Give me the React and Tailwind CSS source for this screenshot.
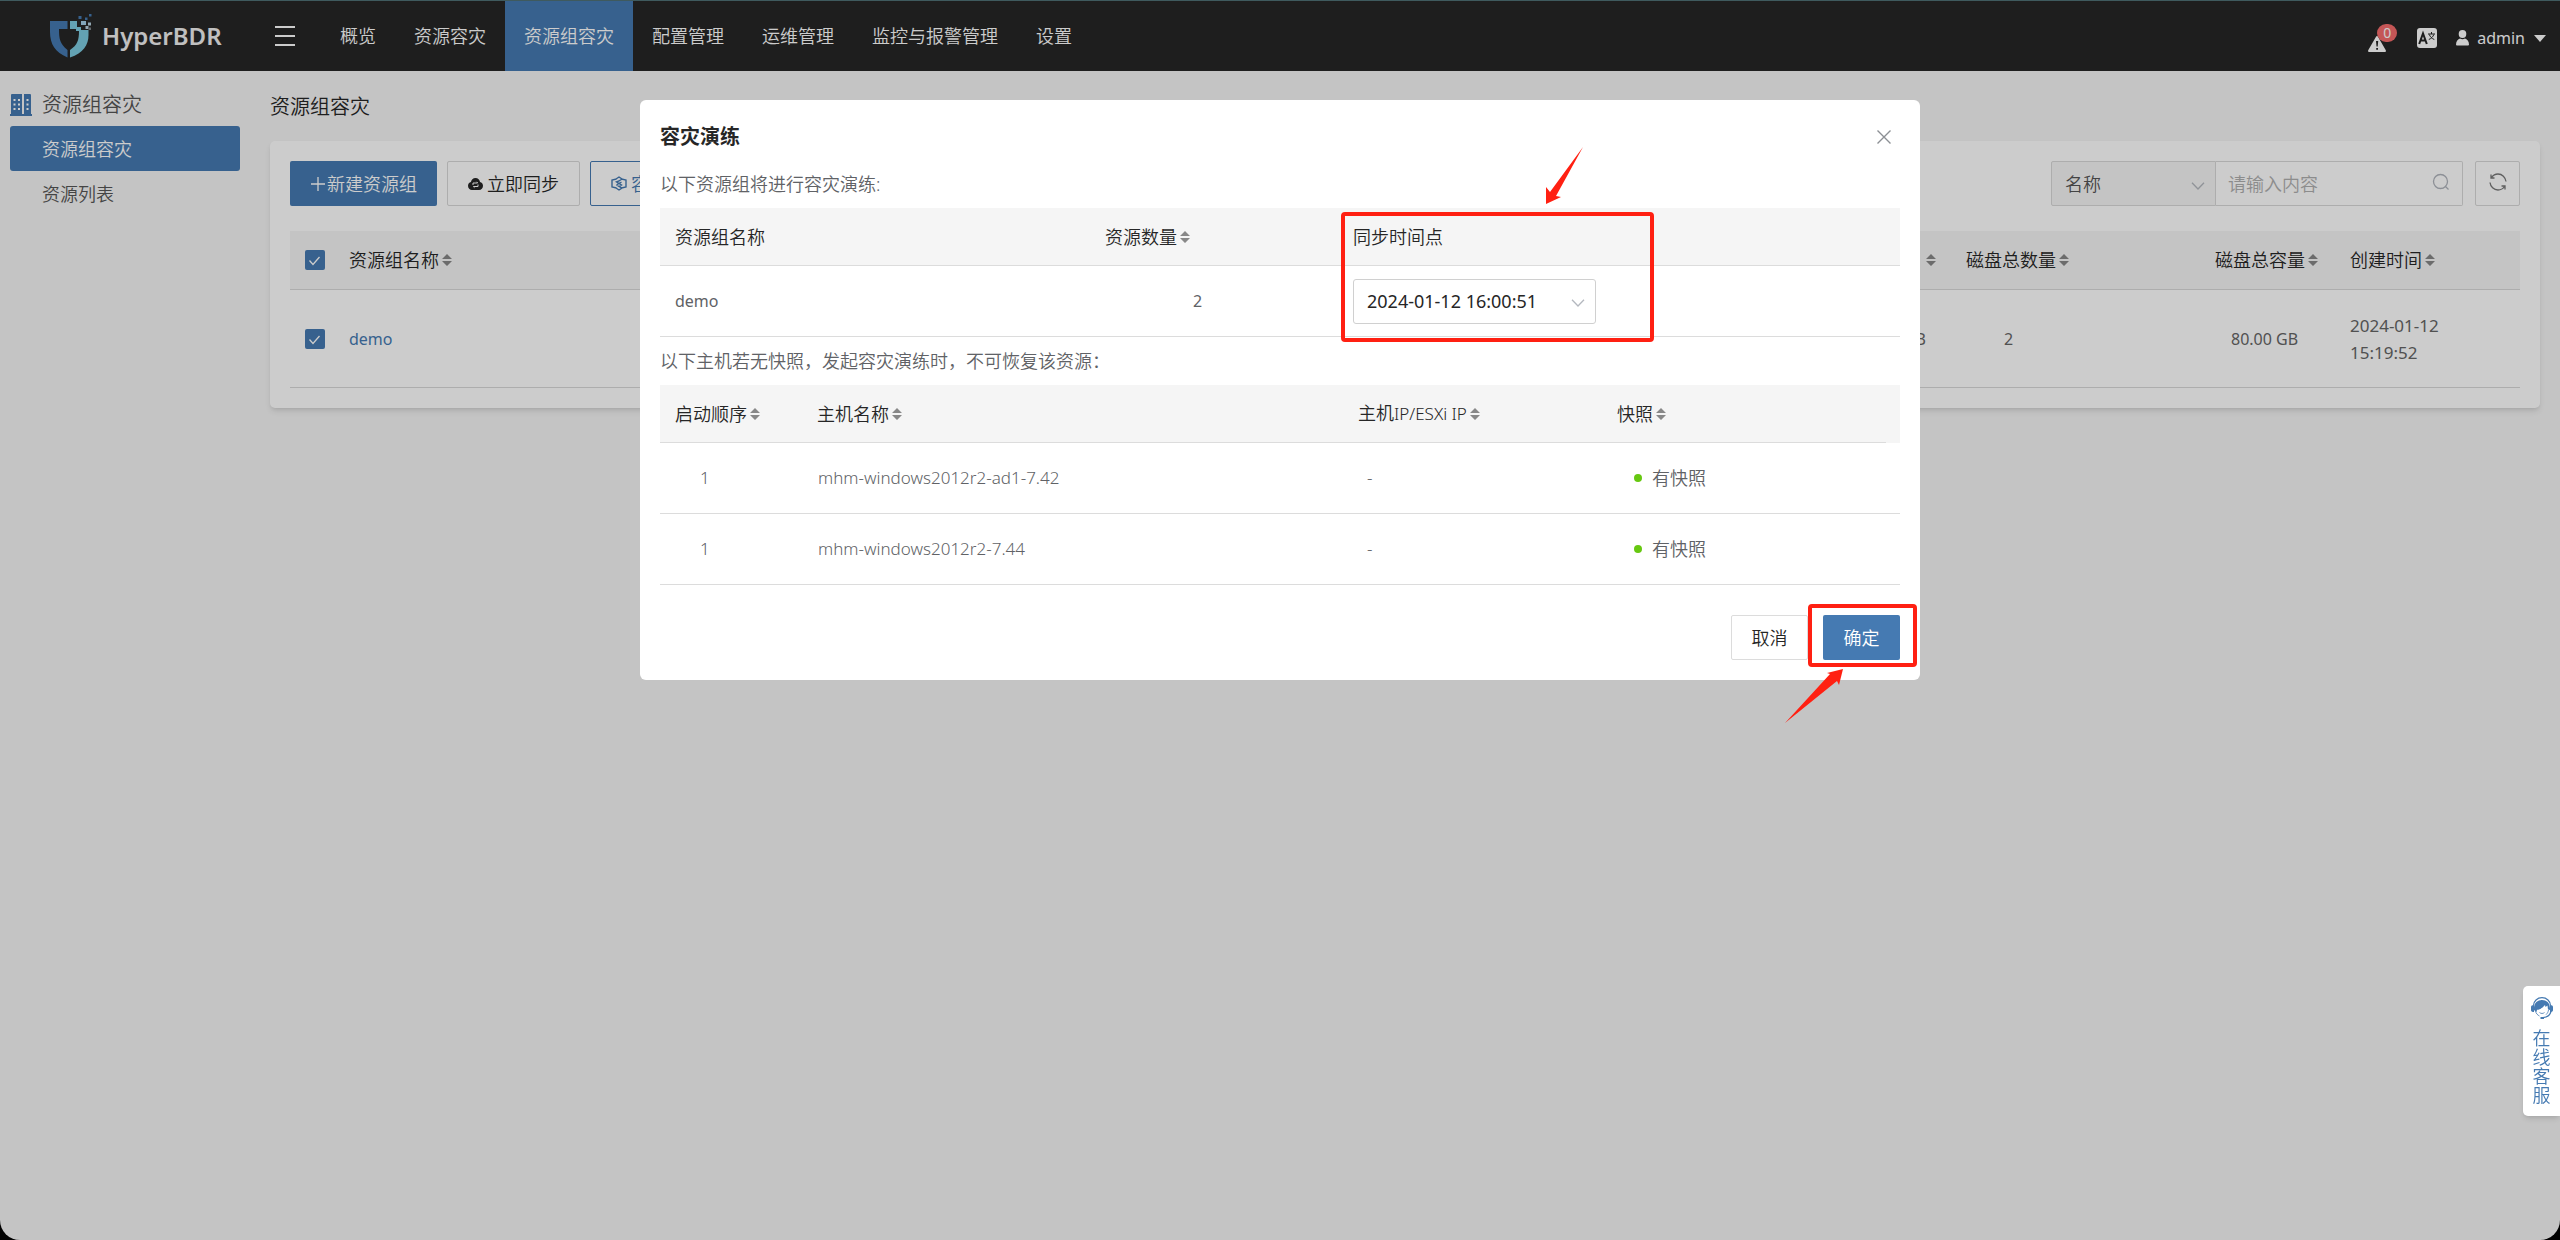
import React, { useState } from "react";

const NAV = ["概览", "资源容灾", "资源组容灾", "配置管理", "运维管理", "监控与报警管理", "设置"];

const HOSTS = [
  { order: 1, name: "mhm-windows2012r2-ad1-7.42", ip: "-", snapshot: "有快照" },
  { order: 1, name: "mhm-windows2012r2-7.44", ip: "-", snapshot: "有快照" },
];

function SortIcon() {
  return (
    <svg className="h-3 w-[10px] shrink-0 fill-[#888]" viewBox="0 0 10 12" aria-hidden="true">
      <path d="M5 0 10 5H0ZM5 12 0 7h10Z" />
    </svg>
  );
}

function Sortable({ children }) {
  return (
    <span className="flex items-center gap-[3px]">
      {children}
      <SortIcon />
    </span>
  );
}

function Chevron({ className }) {
  return (
    <svg className={className} viewBox="0 0 14 8" fill="none" stroke="#b4b8bf" strokeWidth="1.3" aria-hidden="true">
      <path d="m1 .8 6 6.2 6-6.2" />
    </svg>
  );
}

function Checkbox({ label }) {
  return (
    <label className="grid w-5">
      <input
        type="checkbox"
        defaultChecked
        aria-label={label}
        className="col-start-1 row-start-1 size-5 appearance-none rounded-[2px] bg-[#457ab2]"
      />
      <svg className="pointer-events-none col-start-1 row-start-1 size-5" viewBox="0 0 20 20" fill="none" stroke="#fff" strokeWidth="1.3">
        <path d="m4.500 10.500 3.500 4L14.500 7" />
      </svg>
    </label>
  );
}

function Logo() {
  return (
    <a href="#" className="flex items-center gap-[10px] text-2xl font-semibold text-[#f0f0f0]">
      <svg className="h-11 w-[42px]" viewBox="0 0 42 44">
        <path fill="#457ab2" d="M0 7h17.500v8H9c0 10 1 15 8.500 21v7.500C5 38 0 30 0 18Z" />
        <path fill="#7ccbe0" d="M20 7h7v6h4v3h7.500v5c0 10-5 18-18.500 22.500V36c7.500-5 9-10 9-19h-3v-2h-6Z" />
        <path fill="#a4cfe8" d="M31 7h5v4h-5z" />
        <path fill="#457ab2" d="M28.500 2h3v3h-3zM35 3.500h2.500V6H35zM39 0h2.500v2.500H39z" />
        <path fill="#b8d2e2" d="M38 8.500h3v3h-3zM35.500 12h3v3h-3z" />
        <path fill="#7c8288" d="M38.500 13.500h2.500V16h-2.500z" />
      </svg>
      HyperBDR
    </a>
  );
}

function Header() {
  return (
    <header className="flex h-[71px] items-stretch border-t border-[#4f7176] bg-[#262626] text-white">
      <div className="flex w-[225px] items-center pl-[50px]">
        <Logo />
      </div>
      <button type="button" aria-label="菜单" className="ml-[50px] flex w-5 flex-col justify-center gap-[7px]">
        <span className="h-[2px] bg-white" />
        <span className="h-[2px] bg-white" />
        <span className="h-[2px] bg-white" />
      </button>
      <nav className="ml-[26px] flex">
        {NAV.map((item) => (
          <a
            key={item}
            href="#"
            className={`flex items-center whitespace-nowrap px-[19px] ${item === "资源组容灾" ? "bg-[#457ab2]" : ""}`}
          >
            {item}
          </a>
        ))}
      </nav>
      <div className="ml-auto flex items-center pt-1 pr-[14px] font-normal">
        <button type="button" aria-label="报警" className="relative mt-3">
          <svg className="block h-4 w-[18px]" viewBox="0 0 18 16">
            <path fill="#fff" d="M9 0q.6 0 1 .8l7.800 13.400q.5 1.500-.8 1.800H1Q-.3 15.700.2 14.200L8 .8Q8.400 0 9 0Z" />
            <path fill="#262626" d="M8 5h2.200l-.5 5.500H8.500ZM8.200 12h1.800v1.800H8.200z" />
          </svg>
          <span className="absolute -top-3 left-[9px] flex h-[18px] w-5 items-center justify-center rounded-full bg-[#f56c6c] text-sm">
            0
          </span>
        </button>
        <button type="button" aria-label="语言" className="ml-[31px]">
          <svg className="block size-5" viewBox="0 0 20 20">
            <rect width="20" height="20" rx="3" fill="#fff" />
            <path fill="none" stroke="#262626" strokeWidth="2" d="M2.200 16 6 5.500 9.800 16M3.500 12.500h5" />
            <path fill="none" stroke="#262626" strokeWidth="1" d="M11 6h7M14.500 4v2M12.300 6.500c.8 2.300 2.500 4 5 5M16.800 6.500c-.8 2.300-2.500 4-5 5" />
          </svg>
        </button>
        <button type="button" className="ml-[19px] flex items-center text-base">
          <svg className="mr-2 h-4 w-[13px] fill-white" viewBox="0 0 13 16">
            <ellipse cx="6.500" cy="4" rx="3.800" ry="4" />
            <path d="M0 14.500C0 11 2 9 4 8.500c1.500 1 3.500 1 5 0 2 .5 4 2.500 4 6q0 1-1 1H1q-1 0-1-1Z" />
          </svg>
          admin
          <svg className="ml-[9px] h-[7px] w-3 fill-white" viewBox="0 0 12 7">
            <path d="M0 0h12L6 7Z" />
          </svg>
        </button>
      </div>
    </header>
  );
}

function Sidebar() {
  return (
    <aside className="w-[250px] shrink-0 px-[10px] pt-[13px] text-[#555]">
      <div className="flex h-[42px] items-center gap-[10px] text-xl">
        <svg className="size-[22px]" viewBox="0 0 22 22">
          <path fill="#457ab2" d="M2 0h10v20H1V1Q1 0 2 0ZM14 0h6q1 0 1 1v19h-7ZM0 20h22v2H0Z" />
          <path fill="#fff" d="M3.500 5h2v2h-2zM8 5h2v2H8zM3.500 9.500h2v2h-2zM8 9.500h2v2H8zM3.500 14h2v2h-2zM8 14h2v2H8zM16.500 5h2v2h-2zM16.500 9.500h2v2h-2zM16.500 14h2v2h-2z" />
        </svg>
        资源组容灾
      </div>
      <a href="#" className="flex h-[45px] items-center rounded-[3px] bg-[#457ab2] pl-8 text-white">
        资源组容灾
      </a>
      <a href="#" className="flex h-[45px] items-center pl-8">
        资源列表
      </a>
    </aside>
  );
}

function Toolbar() {
  return (
    <div className="flex h-[45px] text-[#262626]">
      <button type="button" className="flex items-center rounded-[2px] bg-[#457ab2] px-5 text-white">
        <svg className="mr-px h-4 w-4" viewBox="0 0 16 16" fill="none" stroke="currentColor" strokeWidth="1.3">
          <path d="M8 1v14M1 8h14" />
        </svg>
        新建资源组
      </button>
      <button type="button" className="ml-[10px] flex items-center gap-1 rounded-[2px] border border-[#d9d9d9] px-5">
        <svg className="h-3 w-[15px]" viewBox="0 0 15 12">
          <path fill="#262626" d="M7.500 0c2.500 0 4.300 1.700 4.500 4 1.800.5 3 1.900 3 3.800 0 2.400-1.700 4.200-4 4.200H4C1.700 12 0 10.200 0 7.800 0 5.900 1.200 4.500 3 4 3.200 1.700 5 0 7.500 0Z" />
          <path fill="none" stroke="#fff" d="M5 7V5h4.500M8.500 3.800 9.700 5M10 6.500v2H5.500M6.500 9.700 5.300 8.500" />
        </svg>
        立即同步
      </button>
      <button type="button" className="ml-[10px] flex items-center gap-1 rounded-[2px] border border-[#457ab2] px-5 text-[#457ab2]">
        <svg className="h-[15px] w-4" viewBox="0 0 16 15" fill="none" stroke="currentColor" strokeWidth="1.4">
          <path d="M5.500 3 1 4v7l4.500 1M10.500 3 15 4v7l-4.500 1M5 3l3-2 3 2-3 2-2.500 1L8 7.500 10.500 6M5.500 9 8 7.500 10.500 9 8 10.500M5 12l3 2 3-2-3-1.500L5.500 9" />
        </svg>
        容灾演练
      </button>

      <div className="ml-auto flex">
        <div className="grid w-[165px] items-center">
          <select
            aria-label="搜索字段"
            className="col-start-1 row-start-1 h-[45px] appearance-none rounded-l-[2px] border border-[#d9d9d9] bg-[#f5f5f5] pl-[13px] text-[#555]"
          >
            <option>名称</option>
          </select>
          <Chevron className="pointer-events-none col-start-1 row-start-1 mr-[11px] mt-1 h-2 w-[14px] justify-self-end" />
        </div>
        <div className="flex w-[247px] items-center rounded-r-[2px] border border-l-0 border-[#d9d9d9] px-3">
          <input
            type="text"
            aria-label="搜索内容"
            placeholder="请输入内容"
            className="min-w-0 flex-1 bg-transparent outline-none placeholder:text-[#b0b0b0]"
          />
          <svg className="mb-1 size-[18px]" viewBox="0 0 18 18" fill="none" stroke="#b0b4bc" strokeWidth="1.3">
            <circle cx="8.500" cy="8.500" r="7" />
            <path d="m13.500 13.500 3 3" />
          </svg>
        </div>
        <button
          type="button"
          aria-label="刷新"
          className="ml-3 flex w-[45px] items-center justify-center rounded-[2px] border border-[#d9d9d9]"
        >
          <svg className="mb-1 size-[18px]" viewBox="0 0 18 18" fill="none" stroke="#777" strokeWidth="1.300">
            <path d="M2 1.500V5h3.500M2.500 4.500C4 2.300 6.300 1 9 1c4.200 0 7.500 3.300 8 7.500M16 16.500V13h-3.500M15.500 13.500C14 15.700 11.700 17 9 17c-4.200 0-7.500-3.300-8-7.500" />
          </svg>
        </button>
      </div>
    </div>
  );
}

function GroupTable() {
  return (
    <table className="mt-[25px] w-full table-fixed border-separate border-spacing-0 text-left">
      <colgroup>
        <col className="w-[44px]" />
        <col />
        <col className="w-[200px]" />
        <col className="w-[249px]" />
        <col className="w-[135px]" />
        <col className="w-[185px]" />
      </colgroup>
      <thead>
        <tr className="h-[59px] bg-[#f5f5f5] text-[#262626] *:border-b *:border-[#d9d9d9] *:px-[15px] *:font-[350]">
          <th>
            <Checkbox label="全选" />
          </th>
          <th>
            <Sortable>资源组名称</Sortable>
          </th>
          <th>
            <span className="flex justify-end">
              <SortIcon />
            </span>
          </th>
          <th>
            <Sortable>磁盘总数量</Sortable>
          </th>
          <th>
            <Sortable>磁盘总容量</Sortable>
          </th>
          <th>
            <Sortable>创建时间</Sortable>
          </th>
        </tr>
      </thead>
      <tbody>
        <tr className="h-[98px] text-base font-normal text-[#666] *:border-b *:border-[#d9d9d9] *:px-[15px]">
          <td>
            <Checkbox label="选择 demo" />
          </td>
          <td>
            <a href="#" className="text-[#457ab2]">
              demo
            </a>
          </td>
          <td>
            <div className="pr-[10px] text-right">GB</div>
          </td>
          <td>
            <div className="pl-[38px]">2</div>
          </td>
          <td>
            <div className="pl-4 whitespace-nowrap">80.00 GB</div>
          </td>
          <td className="text-[17px] leading-[27px]">
            2024-01-12
            <br />
            15:19:52
          </td>
        </tr>
      </tbody>
    </table>
  );
}

function DrillDialog({ onClose }) {
  return (
    <div
      role="dialog"
      aria-labelledby="drill-title"
      className="relative mx-auto mt-[100px] w-1/2 rounded-[6px] bg-white px-5 pt-[21px] pb-5 text-[#606266]"
    >
      <div className="flex h-8 items-center justify-between pr-[9px]">
        <h2 id="drill-title" className="text-xl font-bold text-[#262626]">
          容灾演练
        </h2>
        <button type="button" aria-label="关闭" onClick={onClose}>
          <svg className="block size-[14px]" viewBox="0 0 14 14" fill="none" stroke="#8c8f94" strokeWidth="1.400">
            <path d="m.5.5 13 13M13.500.5l-13 13" />
          </svg>
        </button>
      </div>

      <p className="mt-[7px] flex h-12 items-center">以下资源组将进行容灾演练:</p>
      <table className="w-full table-fixed border-separate border-spacing-0 text-left">
        <colgroup>
          <col className="w-[430px]" />
          <col className="w-[248px]" />
          <col />
        </colgroup>
        <thead>
          <tr className="h-[58px] bg-[#f5f5f5] text-[#262626] *:border-b *:border-[#dcdcdc] *:px-[15px] *:font-[350]">
            <th>资源组名称</th>
            <th>
              <Sortable>资源数量</Sortable>
            </th>
            <th>同步时间点</th>
          </tr>
        </thead>
        <tbody>
          <tr className="h-[71px] text-base font-normal *:border-b *:border-[#dcdcdc] *:px-[15px]">
            <td>demo</td>
            <td>
              <div className="pl-[88px]">2</div>
            </td>
            <td>
              <div className="grid w-[243px] items-center">
                <select
                  aria-label="同步时间点"
                  className="col-start-1 row-start-1 h-[45px] appearance-none rounded-[3px] border border-[#d0d0d0] bg-white pl-[13px] text-lg text-[#262626]"
                >
                  <option>2024-01-12 16:00:51</option>
                </select>
                <Chevron className="pointer-events-none col-start-1 row-start-1 mr-[11px] mt-1 h-2 w-[14px] justify-self-end" />
              </div>
            </td>
          </tr>
        </tbody>
      </table>

      <p className="flex h-12 items-center">以下主机若无快照，发起容灾演练时，不可恢复该资源：</p>
      <table className="w-full table-fixed border-separate border-spacing-0 text-left">
        <colgroup>
          <col className="w-[142px]" />
          <col />
          <col className="w-[274px]" />
          <col className="w-[269px]" />
          <col className="w-[14px]" />
        </colgroup>
        <thead>
          <tr className="h-[58px] bg-[#f5f5f5] text-[#262626] *:border-[#dcdcdc] *:font-[350]">
            <th className="border-b pl-[15px]">
              <Sortable>启动顺序</Sortable>
            </th>
            <th className="border-b pl-[15px]">
              <Sortable>主机名称</Sortable>
            </th>
            <th className="border-b pl-[15px]">
              <Sortable>
                <span>
                  主机<span className="text-[17px]">IP/ESXi IP</span>
                </span>
              </Sortable>
            </th>
            <th className="border-b">
              <Sortable>快照</Sortable>
            </th>
            <td />
          </tr>
        </thead>
        <tbody>
          {HOSTS.map((host) => (
            <tr key={host.name} className="h-[71px] text-[17px] *:border-b *:border-[#dcdcdc]">
              <td className="pl-10">{host.order}</td>
              <td className="pl-4">{host.name}</td>
              <td className="pl-6">{host.ip}</td>
              <td>
                <span className="flex items-center gap-[10px] pl-[17px] text-lg">
                  <span className="size-2 rounded-full bg-[#67c811]" />
                  {host.snapshot}
                </span>
              </td>
              <td />
            </tr>
          ))}
        </tbody>
      </table>

      <div className="mt-[30px] flex justify-end gap-[15px]">
        <button type="button" onClick={onClose} className="h-[45px] w-[77px] rounded-[2px] border border-[#dcdcdc] text-[#262626]">
          取消
        </button>
        <button type="button" className="h-[45px] w-[77px] rounded-[2px] bg-[#457ab2] text-white">
          确定
        </button>
      </div>

      {/* guide marks over the dialog */}
      <div className="pointer-events-none absolute top-[112px] right-[266px] h-[130px] w-[313px] rounded-[4px] border-4 border-[#ff2012]" />
      <svg className="pointer-events-none absolute top-[47px] right-[337px] h-[57px] w-[37px] fill-[#ff2012]" viewBox="0 0 37 57">
        <path d="M37 0 10 49l5 1L0 57V40l4 5Z" />
      </svg>
      <div className="pointer-events-none absolute right-[3px] bottom-[13px] h-[63px] w-[109px] rounded-[4px] border-4 border-[#ff2012]" />
      <svg className="pointer-events-none absolute -bottom-[43px] right-[77px] h-[54px] w-[58px] fill-[#ff2012]" viewBox="0 0 58 54">
        <path d="M0 54 45 5l-3-1L58 0l-4 16-2-4Z" />
      </svg>
    </div>
  );
}

function SupportTab() {
  return (
    <a
      href="#"
      className="fixed top-[986px] right-0 flex h-[130px] w-[37px] flex-col items-center rounded-l-[5px] bg-white pt-[11px] text-[#457ab2] shadow-md"
    >
      <svg className="size-[22px]" viewBox="0 0 22 22">
        <path fill="none" stroke="#457ab2" strokeWidth="1.200" d="M2.500 8.500a8.500 7.800 0 0 1 17 0M20 14.500c-1 3.500-3.500 5.700-8 6.200" />
        <path fill="#457ab2" d="M0 10Q0 8 3 8v7Q0 15 0 13ZM22 10q0-2-3-2v7Q22 15 22 13ZM3 13C2.500 6 6.500 3 11 3s8.500 3 8 10l-2-.5-.5-4-2 1.500-.5-2c-2.500 3-5 4.500-8 4.800L5.500 15ZM9.500 20h3.500v2H9.500z" />
        <path fill="none" stroke="#457ab2" strokeWidth=".8" d="M4.500 14c.5 2.500 2 4 4 5M17.500 13c-.3 2-1.200 3.500-2.500 4.700M8.500 15.500c1.500 1.300 3.500 1.300 5 0" />
      </svg>
      <span className="mt-[10px] w-[18px] leading-[19px] break-all">在线客服</span>
    </a>
  );
}

export default function App() {
  const [open, setOpen] = useState(true);

  return (
    <div className="bg-black font-['Noto_Sans','Noto_Sans_CJK_SC',sans-serif] text-lg font-[350]">
      <div className="min-h-screen rounded-b-[20px] bg-[#f5f5f5]">
        <Header />
        <div className="flex">
          <Sidebar />
          <main className="min-w-0 flex-1 px-5">
            <h1 className="flex h-[70px] items-center pt-px text-xl text-[#262626]">资源组容灾</h1>
            <section className="rounded-[5px] bg-white p-5 shadow-md">
              <Toolbar />
              <GroupTable />
            </section>
          </main>
        </div>
      </div>

      {open && (
        <div className="fixed inset-0 bg-black/20">
          <DrillDialog onClose={() => setOpen(false)} />
        </div>
      )}
      <SupportTab />
    </div>
  );
}
